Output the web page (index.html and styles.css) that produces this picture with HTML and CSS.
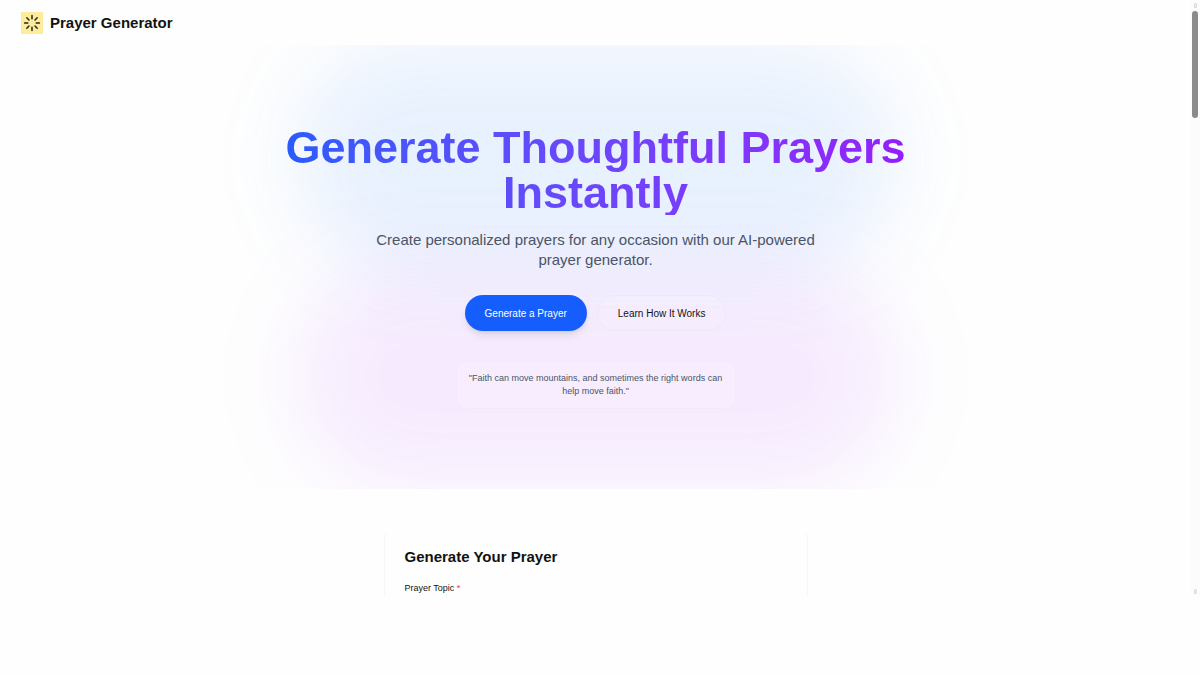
FILE: index.html
```html
<!DOCTYPE html>
<html lang="en">
<head>
  <meta charset="UTF-8">
  <meta name="viewport" content="width=device-width, initial-scale=1">
  <title>Prayer Generator</title>
  <link rel="stylesheet" href="styles.css">
</head>
<body>
  <div class="viewport">
    <div class="page">
      <header class="header">
        <svg class="logo" viewBox="0 0 22 22" aria-hidden="true">
          <rect width="22" height="22" fill="#fdec9b"/>
          <g stroke="#29261b" stroke-width="1.5" stroke-linecap="round">
            <path d="M11 3.6v3.2M11 15.2v3.2M3.6 11h3.2M15.2 11h3.2"/>
            <path d="M5.8 5.8l2.2 2.2M14 14l2.2 2.2M5.8 16.2l2.2-2.2M14 8l2.2-2.2"/>
          </g>
        </svg>
        <span class="brand">Prayer Generator</span>
      </header>

      <main>
        <section class="hero">
          <div class="glow glow-blue"></div>
          <div class="glow glow-purple"></div>
          <div class="hero-content">
            <h1>Generate Thoughtful Prayers Instantly</h1>
            <p class="subtitle">Create personalized prayers for any occasion with our AI-powered prayer generator.</p>
            <div class="actions">
              <button type="button" class="btn btn-primary">Generate a Prayer</button>
              <button type="button" class="btn btn-outline">Learn How It Works</button>
            </div>
            <blockquote class="quote">"Faith can move mountains, and sometimes the right words can help move faith."</blockquote>
          </div>
        </section>

        <section class="card">
          <h2>Generate Your Prayer</h2>
          <form>
            <label for="topic">Prayer Topic <span class="required">*</span></label>
            <input type="text" id="topic" name="topic" required>
          </form>
        </section>
      </main>
    </div>

    <div class="scrollbar" aria-hidden="true">
      <span class="arrow">▯</span>
      <div class="track"><div class="thumb"></div></div>
      <span class="arrow">▯</span>
    </div>
  </div>
</body>
</html>
```
FILE: styles.css
```css
* {
  box-sizing: border-box;
}
body {
  margin: 0;
  height: 100vh;
  padding-bottom: 78px;
  background: #fefefe;
  color: #121212;
  font-family: "Liberation Sans", Arial, sans-serif;
  overflow: hidden;
}
h1, h2, p, blockquote {
  margin: 0;
}
.viewport {
  display: flex;
  height: 100%;
}
.page {
  flex: 1;
  overflow: hidden;
}

/* header */
.header {
  display: flex;
  align-items: center;
  gap: 7px;
  height: 45px;
  padding: 0 21px;
}
.logo {
  width: 22px;
  height: 22px;
}
.brand {
  font-size: 15px;
  line-height: 18px;
  font-weight: bold;
}

/* hero */
.hero {
  position: relative;
  overflow: hidden;
  padding: 80px 20px;
}
.glow {
  position: absolute;
  left: 50%;
  width: 600px;
  height: 226px;
  margin-left: -300px;
  border-radius: 113px;
  filter: blur(40px);
}
.glow-blue {
  top: 0;
  background: rgba(43, 127, 255, 0.1);
}
.glow-purple {
  bottom: 0;
  background: rgba(173, 70, 255, 0.1);
}
.hero-content {
  position: relative;
  display: flex;
  flex-direction: column;
  align-items: center;
  max-width: 700px;
  margin: 0 auto;
  text-align: center;
}
h1 {
  font-size: 45px;
  line-height: 45px;
  background: linear-gradient(to right in oklab, #155dfc, #9810fa);
  background-clip: text;
  -webkit-background-clip: text;
  color: transparent;
}
.subtitle {
  max-width: 450px;
  margin-top: 15px;
  font-size: 15px;
  line-height: 20px;
  color: #4a5565;
}
.actions {
  display: flex;
  gap: 10px;
  margin-top: 25px;
}
.btn {
  height: 36px;
  padding: 0 20px;
  border: none;
  border-radius: 18px;
  font-family: inherit;
  font-size: 10px;
  cursor: pointer;
}
.btn-primary {
  background: #155dfc;
  color: white;
  box-shadow: 0 6px 9px -2px rgba(0, 0, 0, 0.1), 0 2px 4px -2px rgba(0, 0, 0, 0.1);
}
.btn-outline {
  background: rgba(255, 255, 255, 0.1);
  border: 1px solid rgba(0, 0, 0, 0.02);
  color: #121212;
}
.quote {
  max-width: 280px;
  margin-top: 30px;
  padding: 10px;
  border: 1px solid rgba(0, 0, 0, 0.02);
  border-radius: 9px;
  background: rgba(255, 255, 255, 0.1);
  font-size: 9px;
  line-height: 13px;
  color: #4a5565;
}

/* prayer form */
.card {
  max-width: 424px;
  margin: 42px auto 0;
  padding: 15px 20px;
  border: 1px solid #f6f6f6;
  border-top-color: transparent;
  border-radius: 6px;
}
h2 {
  font-size: 15px;
  line-height: 20px;
}
label {
  display: block;
  margin-top: 15px;
  font-size: 9px;
  line-height: 13px;
}
.required {
  color: #fb2c36;
}
input {
  width: 100%;
  height: 28px;
  margin-top: 12px;
  border: 1px solid #e5e5e5;
  border-radius: 6px;
}

/* scrollbar */
.scrollbar {
  display: flex;
  flex-direction: column;
  align-items: center;
  width: 9px;
  padding-right: 1px;
  background: #fcfcfc;
}
.arrow {
  height: 11px;
  font-size: 5px;
  line-height: 11px;
  color: #777;
}
.track {
  flex: 1;
}
.thumb {
  width: 6px;
  height: 107px;
  border-radius: 3px;
  background: #8b8b8b;
}
```
